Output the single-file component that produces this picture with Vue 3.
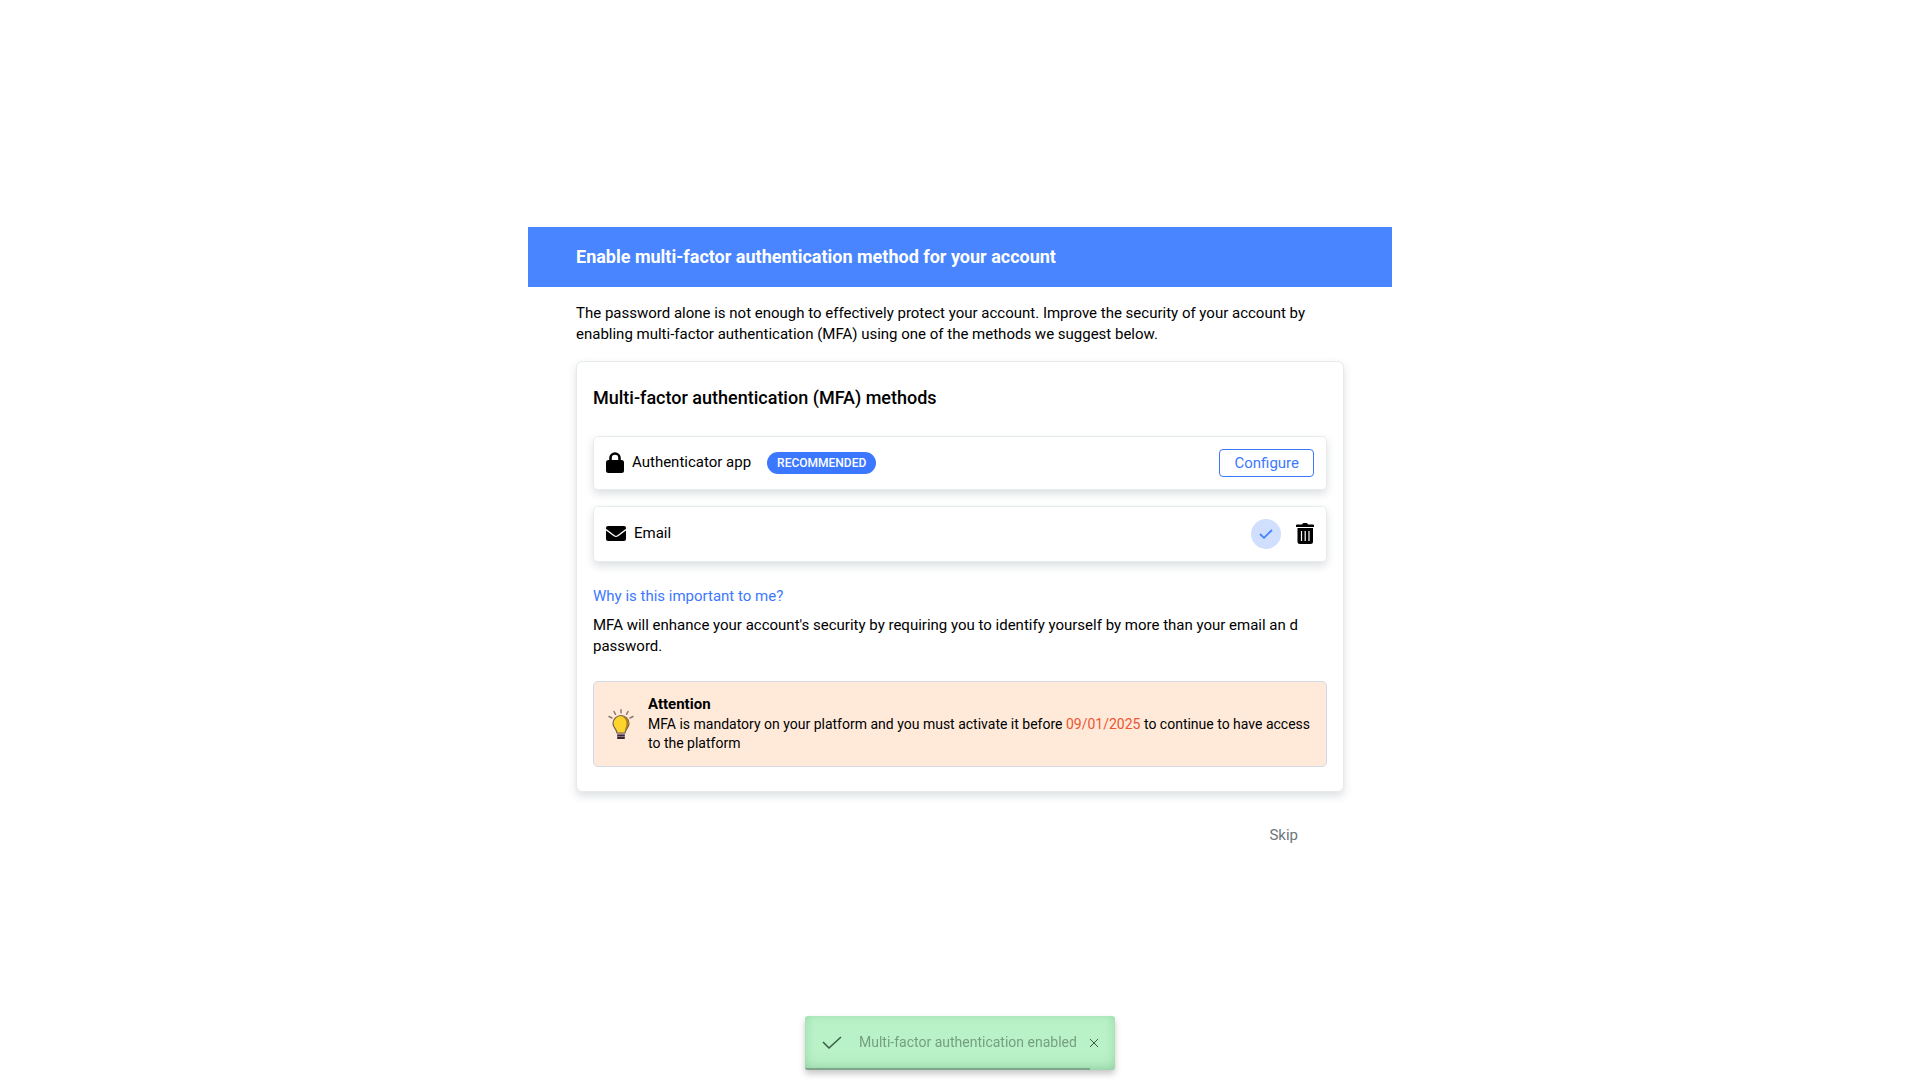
<script setup>
import { ref } from 'vue'

const deadline = '09/01/2025'
const toastVisible = ref(true)
const progress = 92
</script>

<template>
  <main class="page">
    <section class="panel">
      <header class="panel-header">
        <h1>Enable multi-factor authentication method for your account</h1>
      </header>

      <div class="panel-body">
        <p class="text intro">
          The password alone is not enough to effectively protect your account. Improve the security of your account by
          enabling multi-factor authentication (MFA) using one of the methods we suggest below.
        </p>

        <div class="card">
          <h2>Multi-factor authentication (MFA) methods</h2>

          <div class="method">
            <svg class="icon-lock" viewBox="0 0 18 21" aria-hidden="true">
              <path d="M4.500 9V6a4.500 4.500 0 0 1 9 0v3" fill="none" stroke="currentColor" stroke-width="2.600" />
              <rect x="0" y="8" width="18" height="13" rx="2.500" fill="currentColor" />
            </svg>
            <span class="method-name">Authenticator app</span>
            <span class="badge">RECOMMENDED</span>
            <button class="configure" type="button">Configure</button>
          </div>

          <div class="method email">
            <svg class="icon-mail" viewBox="0 0 20 15" aria-hidden="true">
              <rect width="20" height="15" rx="2" fill="currentColor" />
              <path d="M0 3.600L8.200 9.700a3 3 0 0 0 3.600 0L20 3.600" fill="none" stroke="#fff" stroke-width="1.300" />
            </svg>
            <span class="method-name">Email</span>
            <span class="enabled">
              <svg viewBox="0 0 14 10" aria-hidden="true">
                <path d="M1 5L5 8.800L13 1" fill="none" stroke="currentColor" stroke-width="1.800" />
              </svg>
            </span>
            <button class="remove" type="button" aria-label="Remove email method">
              <svg viewBox="0 0 18 21" aria-hidden="true">
                <path d="M1 1.500h5q.5-1.500 1.500-1.500h3q1 0 1.500 1.500h5q1 0 1 1V4H0V2.500q0-1 1-1z" fill="currentColor" />
                <path d="M1.500 5h15.500V18.500a2.500 2.500 0 0 1-2.500 2.500H4a2.500 2.500 0 0 1-2.500-2.500z" fill="currentColor" />
                <path d="M5.500 8v10M9.200 8v10M13 8v10" stroke="#fff" stroke-width="1.200" />
              </svg>
            </button>
          </div>

          <a class="why" href="#why">Why is this important to me?</a>
          <p id="why" class="text reason">
            MFA will enhance your account's security by requiring you to identify yourself by more than your email an d
            password.
          </p>

          <div class="notice">
            <svg class="icon-bulb" viewBox="0 0 26 30" aria-hidden="true">
              <g stroke="#8d7772" stroke-width="1.500" stroke-linecap="round">
                <path d="M13 .8v3M6 2.500l1.500 2.800M20 2.500l-1.500 2.800M1 7.500l3 1.500M25 7.500l-3 1.500" />
              </g>
              <path d="M13 6.500a8 8 0 0 1 8 8c0 4-3.500 5.500-4 9.500H9c-.5-4-4-5.500-4-9.500a8 8 0 0 1 8-8z" fill="#fdd32e" stroke="#716052" stroke-width="1.200" />
              <path d="M13 7a7.500 7.500 0 0 1 7.500 7.500c0 3-2 5-3.500 7.500c0-3 1.500-4.500 1.500-7.500S17 8.500 13 7z" fill="#aa7e17" />
              <path d="M9 24h8v1.600H9z" fill="#9d8b88" />
              <path d="M9.200 25.600h7.600V30H9.200z" fill="#392336" />
              <path d="M9 27.500h8" stroke="#9d8b88" stroke-width=".8" />
            </svg>
            <div class="notice-text">
              <strong>Attention</strong>
              <p>
                MFA is mandatory on your platform and you must activate it before
                <span class="deadline">{{ deadline }}</span> to continue to have access to the platform
              </p>
            </div>
          </div>
        </div>
      </div>

      <footer class="panel-footer">
        <button class="skip" type="button">Skip</button>
      </footer>
    </section>

    <div v-if="toastVisible" class="toast" role="status">
      <svg class="toast-check" viewBox="0 0 20 14" aria-hidden="true">
        <path d="M1 6L7 12L19 1" fill="none" stroke="currentColor" stroke-width="1.500" />
      </svg>
      <span class="toast-text">Multi-factor authentication enabled</span>
      <button class="toast-close" type="button" aria-label="Close" @click="toastVisible = false">
        <svg viewBox="0 0 10 10" aria-hidden="true">
          <path d="M1 1L9 9M9 1L1 9" stroke="currentColor" stroke-width="1" />
        </svg>
      </button>
      <div class="toast-progress" :style="{ width: progress + '%' }"></div>
    </div>
  </main>
</template>

<style>
body {
  margin: 0;
  background: #fff;
}
</style>

<style scoped>
* {
  box-sizing: border-box;
}

.page {
  display: flex;
  align-items: center;
  justify-content: center;
  min-height: 100vh;
  font-family: Roboto, "Liberation Sans", sans-serif;
  color: #000;
}

h1,
h2,
p {
  margin: 0;
}

button {
  font-family: inherit;
  cursor: pointer;
}

svg {
  display: block;
  flex: none;
}

.panel {
  width: 45%;
  min-width: 640px;
}

.panel-header {
  display: flex;
  align-items: center;
  height: 60px;
  padding: 0 48px;
  background: #4885ff;
  color: #fff;
}

h1 {
  font-size: 18px;
  font-weight: 700;
  line-height: 24px;
}

.panel-body {
  padding: 16px 48px 0;
}

.text {
  font-size: 15px;
  line-height: 21px;
}

.card {
  margin-top: 16px;
  padding: 24px 16px;
  border: 1px solid #e8ebeb;
  border-radius: 6px;
  background: #fff;
  box-shadow: 0 4px 8px rgba(38, 60, 66, 0.16);
}

h2 {
  font-size: 18px;
  font-weight: 500;
  line-height: 24px;
}

.method {
  display: flex;
  align-items: center;
  height: 54px;
  margin-top: 26px;
  padding: 0 12px;
  border: 1px solid #e8ebeb;
  border-radius: 5px;
  box-shadow: 0 4px 8px rgba(38, 60, 66, 0.16);
}

.method.email {
  height: 56px;
  margin-top: 16px;
}

.method-name {
  margin-left: 8px;
  padding-bottom: 2px;
  font-size: 15px;
  line-height: 20px;
}

.icon-lock {
  width: 18px;
  height: 21px;
}

.icon-mail {
  width: 20px;
  height: 15px;
}

.badge {
  margin-left: 16px;
  padding: 0 10px;
  border-radius: 11px;
  background: #3c78ff;
  color: #fff;
  font-size: 12px;
  font-weight: 500;
  line-height: 22px;
}

.configure {
  margin-left: auto;
  height: 28px;
  padding: 0 14px;
  border: 1px solid #3c78ff;
  border-radius: 4px;
  background: #fff;
  color: #3c78ff;
  font-size: 15px;
}

.enabled {
  display: flex;
  align-items: center;
  justify-content: center;
  width: 30px;
  height: 30px;
  margin-left: auto;
  border-radius: 50%;
  background: #d1dfff;
  color: #4583ff;
}

.enabled svg {
  width: 14px;
  height: 10px;
}

.remove {
  margin-left: 15px;
  padding: 0;
  border: 0;
  background: none;
  color: #000;
}

.remove svg {
  width: 18px;
  height: 21px;
}

.why {
  display: block;
  margin-top: 24px;
  color: #3c78ff;
  font-size: 15px;
  line-height: 20px;
  text-decoration: none;
}

.reason {
  margin-top: 9px;
}

.notice {
  display: flex;
  align-items: center;
  margin-top: 24px;
  padding: 13px 14px;
  border: 1px solid #d3d7e6;
  border-radius: 5px;
  background: #ffeada;
}

.icon-bulb {
  width: 26px;
  height: 30px;
}

.notice-text {
  margin-left: 14px;
  font-size: 14px;
  line-height: 19px;
}

.notice-text strong {
  display: block;
  margin-bottom: 2px;
  font-size: 15px;
  line-height: 18px;
}

.deadline {
  color: #ed5430;
}

.panel-footer {
  display: flex;
  justify-content: flex-end;
  padding: 24px 80px 0 0;
}

.skip {
  height: 38px;
  padding: 0 14px;
  border: 0;
  background: none;
  color: #6c757d;
  font-size: 15px;
}

.toast {
  position: fixed;
  bottom: 10px;
  left: 50%;
  display: flex;
  align-items: center;
  width: 310px;
  height: 54px;
  padding: 0 16px 0 17px;
  overflow: hidden;
  border-radius: 3px;
  background: #b9f2c7;
  box-shadow: 0 4px 6px rgba(0, 0, 0, 0.22), inset 0 -8px 16px -8px rgba(60, 120, 75, 0.3), inset 0 0 10px rgba(80, 160, 100, 0.2);
  transform: translateX(-50%);
}

.toast-check {
  width: 20px;
  height: 14px;
  color: #385c42;
}

.toast-text {
  margin-left: 17px;
  padding-bottom: 2px;
  font-size: 14px;
  color: #769f80;
  white-space: nowrap;
}

.toast-close {
  margin-left: auto;
  padding: 0;
  border: 0;
  background: none;
  color: #385c42;
}

.toast-close svg {
  width: 10px;
  height: 10px;
}

.toast-progress {
  position: absolute;
  bottom: 0;
  left: 0;
  height: 2px;
  background: #7fa68a;
}
</style>
